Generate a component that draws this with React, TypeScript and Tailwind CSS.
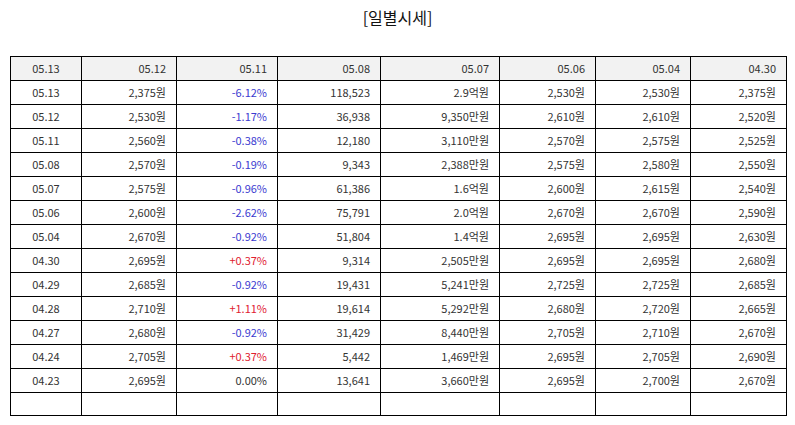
const header = ["05.13", "05.12", "05.11", "05.08", "05.07", "05.06", "05.04", "04.30"];

const rows: string[][] = [
  ["05.13", "2,375원", "-6.12%", "118,523", "2.9억원", "2,530원", "2,530원", "2,375원"],
  ["05.12", "2,530원", "-1.17%", "36,938", "9,350만원", "2,610원", "2,610원", "2,520원"],
  ["05.11", "2,560원", "-0.38%", "12,180", "3,110만원", "2,570원", "2,575원", "2,525원"],
  ["05.08", "2,570원", "-0.19%", "9,343", "2,388만원", "2,575원", "2,580원", "2,550원"],
  ["05.07", "2,575원", "-0.96%", "61,386", "1.6억원", "2,600원", "2,615원", "2,540원"],
  ["05.06", "2,600원", "-2.62%", "75,791", "2.0억원", "2,670원", "2,670원", "2,590원"],
  ["05.04", "2,670원", "-0.92%", "51,804", "1.4억원", "2,695원", "2,695원", "2,630원"],
  ["04.30", "2,695원", "+0.37%", "9,314", "2,505만원", "2,695원", "2,695원", "2,680원"],
  ["04.29", "2,685원", "-0.92%", "19,431", "5,241만원", "2,725원", "2,725원", "2,685원"],
  ["04.28", "2,710원", "+1.11%", "19,614", "5,292만원", "2,680원", "2,720원", "2,665원"],
  ["04.27", "2,680원", "-0.92%", "31,429", "8,440만원", "2,705원", "2,710원", "2,670원"],
  ["04.24", "2,705원", "+0.37%", "5,442", "1,469만원", "2,695원", "2,705원", "2,690원"],
  ["04.23", "2,695원", "0.00%", "13,641", "3,660만원", "2,695원", "2,700원", "2,670원"],
];

const widths = ["w-[71px]", "w-[95px]", "w-[101px]", "w-[103px]", "w-[119px]", "w-[96px]", "w-[95px]", "w-[96px]"];

const rateColor = (v: string) =>
  v.startsWith("-") ? "text-[#3b3bd0]" : v.startsWith("+") ? "text-[#e0202f]" : "text-[#333]";

const App = () => {
  return (
    <div className="w-[795px] h-[425px] bg-white text-[#333] font-['Noto_Sans_CJK_KR','Noto_Sans',sans-serif]">
      <h1 className="pt-[6px] h-[56px] text-center text-[16px] leading-[22px] text-[#111]">[일별시세]</h1>
      <table className="ml-[10px] w-[776px] table-fixed border-collapse border border-black text-[11px]">
        <colgroup>
          {widths.map((w, i) => (
            <col key={i} className={w} />
          ))}
        </colgroup>
        <thead>
          <tr className="h-[24px] bg-[#f2f2f2]">
            {header.map((h, i) => (
              <th
                key={i}
                className={`border border-black font-normal p-0 ${i === 0 ? "text-center" : "text-right pr-[10px]"}`}
              >
                {h}
              </th>
            ))}
          </tr>
        </thead>
        <tbody>
          {rows.map((r, ri) => (
            <tr key={ri} className="h-[24px]">
              {r.map((c, ci) => (
                <td
                  key={ci}
                  className={`border border-black p-0 ${ci === 0 ? "text-center" : "text-right pr-[10px]"} ${ci === 2 ? rateColor(c) : ""}`}
                >
                  {c}
                </td>
              ))}
            </tr>
          ))}
          <tr className="h-[23px]">
            {header.map((_, i) => (
              <td key={i} className="border border-black p-0" />
            ))}
          </tr>
        </tbody>
      </table>
    </div>
  );
};

export default App;
